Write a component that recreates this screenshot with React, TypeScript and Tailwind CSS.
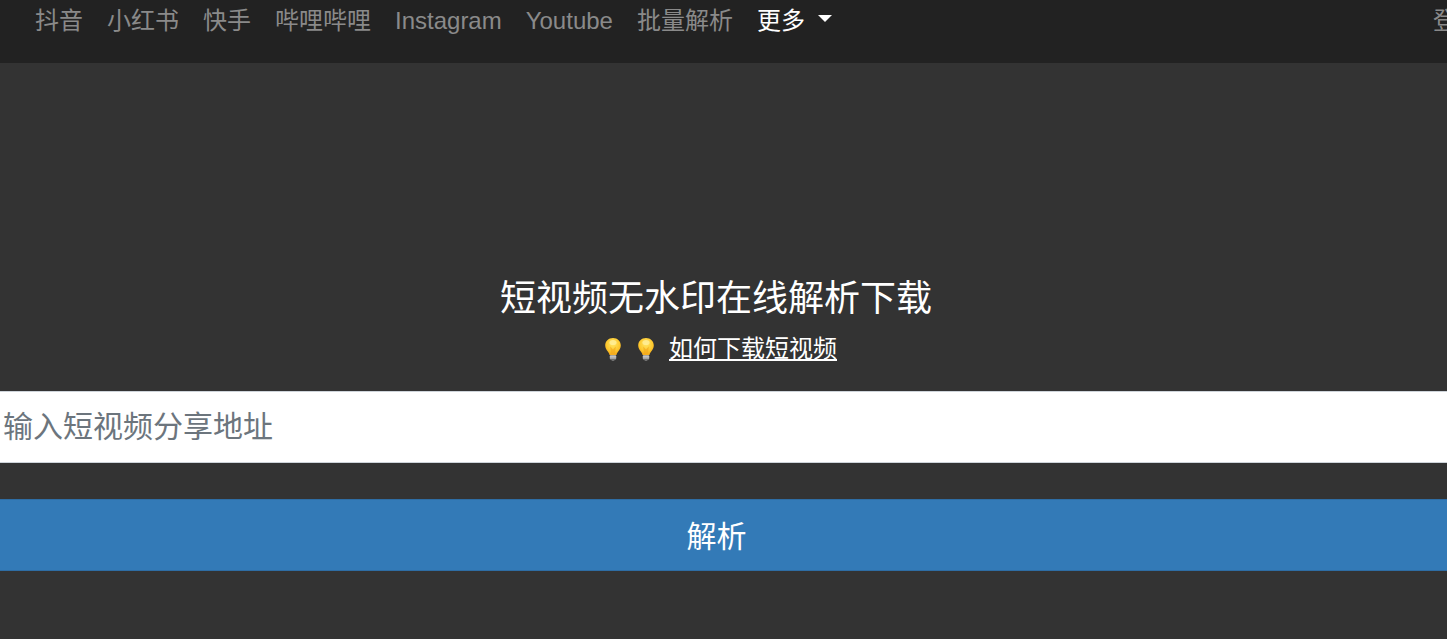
const font = { fontFamily: '"Liberation Sans", "Noto Sans CJK SC", sans-serif' };

function Bulb() {
  return (
    <svg width="18" height="25" viewBox="0 0 18 25" className="shrink-0">
      <defs>
        <radialGradient id="bulbG" cx="50%" cy="35%" r="60%">
          <stop offset="0%" stopColor="#ffe566" />
          <stop offset="70%" stopColor="#fdc92f" />
          <stop offset="100%" stopColor="#f6ae1d" />
        </radialGradient>
      </defs>
      <path d="M9 1C4.4 1 1.2 4.3 1.2 8.4c0 2.6 1.3 4.3 2.6 6 .9 1.2 1.6 2.4 1.8 3.6h6.8c.2-1.2.9-2.4 1.8-3.6 1.3-1.7 2.6-3.4 2.6-6C16.8 4.3 13.6 1 9 1z" fill="url(#bulbG)" />
      <path d="M6.2 9.5 9 12.5l2.8-3L11 17H7z" fill="#f2a81c" opacity="0.7" />
      <ellipse cx="9" cy="5.5" rx="3.6" ry="2.6" fill="#fff0a0" opacity="0.75" />
      <rect x="5.8" y="18" width="6.4" height="4.4" rx="1" fill="#a3a3a3" />
      <rect x="5.8" y="19.4" width="6.4" height="0.9" fill="#d6d6d6" />
      <path d="M7 22.4h4L10 24H8z" fill="#6f6f6f" />
    </svg>
  );
}

export default function App() {
  return (
    <div className="h-[639px] w-[1447px] overflow-hidden bg-[#333333] text-white" style={font}>
      <nav className="flex h-[63px] items-start bg-[#222222] pl-[35px] text-[24px] leading-[42px] text-[#8a8a8a]">
        <div className="flex gap-6">
          <a>抖音</a>
          <a>小红书</a>
          <a>快手</a>
          <a>哔哩哔哩</a>
          <a>Instagram</a>
          <a>Youtube</a>
          <a>批量解析</a>
          <a className="flex items-center text-white">
            更多
            <span className="ml-[13px] mb-[5px] h-0 w-0 border-x-[7px] border-t-[7px] border-x-transparent border-t-white" />
          </a>
        </div>
        <a className="ml-auto w-[14px] overflow-hidden whitespace-nowrap">登录</a>
      </nav>
      <main className="pt-[213px]">
        <h1 className="pr-[15px] text-center text-[36px] leading-[46px]">短视频无水印在线解析下载</h1>
        <div className="mt-[7px] flex h-[40px] items-center justify-center pr-[6px]">
          <Bulb />
          <span className="w-[15px]" />
          <Bulb />
          <a className="ml-[14px] text-[24px] leading-[30px] underline underline-offset-2">如何下载短视频</a>
        </div>
        <input
          placeholder="输入短视频分享地址"
          className="mt-[22px] block h-[72px] w-full border-y border-[#ced4da] bg-white px-[3px] text-[30px] text-[#495057] outline-none placeholder:text-[#6c757d]"
        />
        <button className="mt-[36px] block h-[72px] w-full border-y border-[#2e6da4] bg-[#337ab7] pr-[14px] pt-[2px] text-center text-[30px] text-white">
          解析
        </button>
      </main>
    </div>
  );
}
